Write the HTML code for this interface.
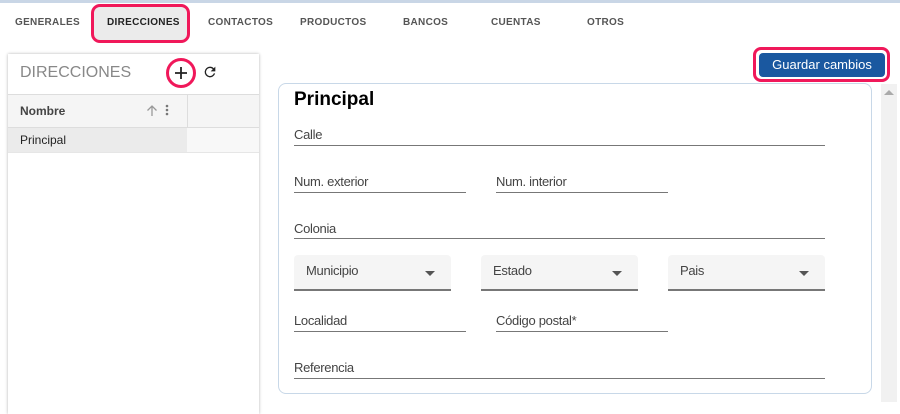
<!DOCTYPE html>
<html><head><style>
*{margin:0;padding:0;box-sizing:border-box}
body{width:900px;height:402px;overflow:hidden;background:#fff;font-family:"Liberation Sans",sans-serif;position:relative}
.a{position:absolute}
.tab{position:absolute;top:17px;font-size:10px;font-weight:bold;color:#555;letter-spacing:.3px}
.lbl{position:absolute;font-size:13px;color:#444;letter-spacing:-.3px}
.ln{position:absolute;height:1px;background:#777}
.sel{position:absolute;background:#f5f5f5;border-bottom:2px solid #777;border-radius:4px 4px 0 0}
.sel span{position:absolute;left:12px;top:8px;font-size:13px;color:#444;letter-spacing:-.3px}
.sel i{position:absolute;right:16px;top:16px;width:0;height:0;border-left:5px solid transparent;border-right:5px solid transparent;border-top:5px solid #555}
</style></head><body>
<div class="a" style="left:0;top:0;width:900px;height:3px;background:#c9d6e6"></div>
<div class="tab" style="left:15px">GENERALES</div>
<div class="a" style="left:91px;top:4px;width:99px;height:39px;background:#ebebeb;border:3px solid #f0185a;border-radius:9px"></div>
<div class="tab" style="left:107px;color:#222">DIRECCIONES</div>
<div class="tab" style="left:208px">CONTACTOS</div>
<div class="tab" style="left:300px">PRODUCTOS</div>
<div class="tab" style="left:403px">BANCOS</div>
<div class="tab" style="left:491px">CUENTAS</div>
<div class="tab" style="left:587px">OTROS</div>

<div class="a" style="left:8px;top:54px;width:251px;height:360px;background:#fff;box-shadow:0 0 3px rgba(0,0,0,.3)"></div>
<div class="a" style="left:20px;top:64px;font-size:16px;color:#888">DIRECCIONES</div>
<div class="a" style="left:166px;top:58px;width:30px;height:30px;border:3px solid #f0185a;border-radius:50%"></div>
<svg class="a" style="left:175px;top:67px" width="12" height="12" viewBox="0 0 12 12"><path d="M6 0v12M0 6h12" stroke="#222" stroke-width="1.8"/></svg>
<svg class="a" style="left:202px;top:64px" width="16" height="16" viewBox="0 0 24 24"><path d="M17.65 6.35A7.96 7.96 0 0 0 12 4a8 8 0 1 0 7.73 10h-2.08A6 6 0 1 1 12 6c1.66 0 3.14.69 4.22 1.78L13 11h7V4z" fill="#222"/></svg>
<div class="a" style="left:8px;top:94px;width:251px;height:34px;background:#f5f5f5;border-top:1px solid #ddd;border-bottom:1px solid #ddd"></div>
<div class="a" style="left:187px;top:94px;width:1px;height:34px;background:#ddd"></div>
<div class="a" style="left:20px;top:104px;font-size:12px;font-weight:bold;color:#444">Nombre</div>
<svg class="a" style="left:146px;top:105px" width="12" height="12" viewBox="0 0 12 12"><path d="M6 11V1M1.5 5.5L6 1l4.5 4.5" stroke="#999" stroke-width="1.3" fill="none"/></svg>
<svg class="a" style="left:165px;top:104px" width="4" height="12" viewBox="0 0 4 12"><circle cx="2" cy="2" r="1.3" fill="#777"/><circle cx="2" cy="6" r="1.3" fill="#777"/><circle cx="2" cy="10" r="1.3" fill="#777"/></svg>
<div class="a" style="left:8px;top:128px;width:179px;height:24px;background:#ebebeb"></div>
<div class="a" style="left:187px;top:128px;width:72px;height:24px;background:#f8f8f8"></div>
<div class="a" style="left:8px;top:152px;width:251px;height:1px;background:#e6e6e6"></div>
<div class="a" style="left:20px;top:133px;font-size:12px;color:#222">Principal</div>

<div class="a" style="left:753px;top:47px;width:137px;height:35px;border:3px solid #f0185a;border-radius:8px"></div>
<div class="a" style="left:759px;top:53px;width:126px;height:24px;background:#1a58a0;border-radius:4px;color:#fff;font-size:13px;text-align:center;line-height:24px">Guardar cambios</div>
<div class="a" style="left:881px;top:84px;width:16px;height:318px;background:#f1f1f1"></div>
<div class="a" style="left:884px;top:90px;width:0;height:0;border-left:5px solid transparent;border-right:5px solid transparent;border-bottom:5px solid #aaa"></div>

<div class="a" style="left:278px;top:83px;width:594px;height:311px;border:1px solid #c8d8e8;border-radius:8px"></div>
<div class="a" style="left:294px;top:89px;font-size:19px;font-weight:bold;color:#000">Principal</div>
<div class="lbl" style="left:294px;top:127px">Calle</div><div class="ln" style="left:294px;top:145px;width:531px"></div>
<div class="lbl" style="left:294px;top:174px">Num. exterior</div><div class="ln" style="left:294px;top:192px;width:172px"></div>
<div class="lbl" style="left:496px;top:174px">Num. interior</div><div class="ln" style="left:496px;top:192px;width:172px"></div>
<div class="lbl" style="left:294px;top:221px">Colonia</div><div class="ln" style="left:294px;top:238px;width:531px"></div>
<div class="sel" style="left:294px;top:255px;width:157px;height:36px"><span>Municipio</span><i></i></div>
<div class="sel" style="left:481px;top:255px;width:157px;height:36px"><span>Estado</span><i></i></div>
<div class="sel" style="left:668px;top:255px;width:157px;height:36px"><span>Pais</span><i></i></div>
<div class="lbl" style="left:294px;top:313px">Localidad</div><div class="ln" style="left:294px;top:331px;width:172px"></div>
<div class="lbl" style="left:496px;top:313px">Código postal*</div><div class="ln" style="left:496px;top:331px;width:172px"></div>
<div class="lbl" style="left:294px;top:360px">Referencia</div><div class="ln" style="left:294px;top:378px;width:531px"></div>
</body></html>
